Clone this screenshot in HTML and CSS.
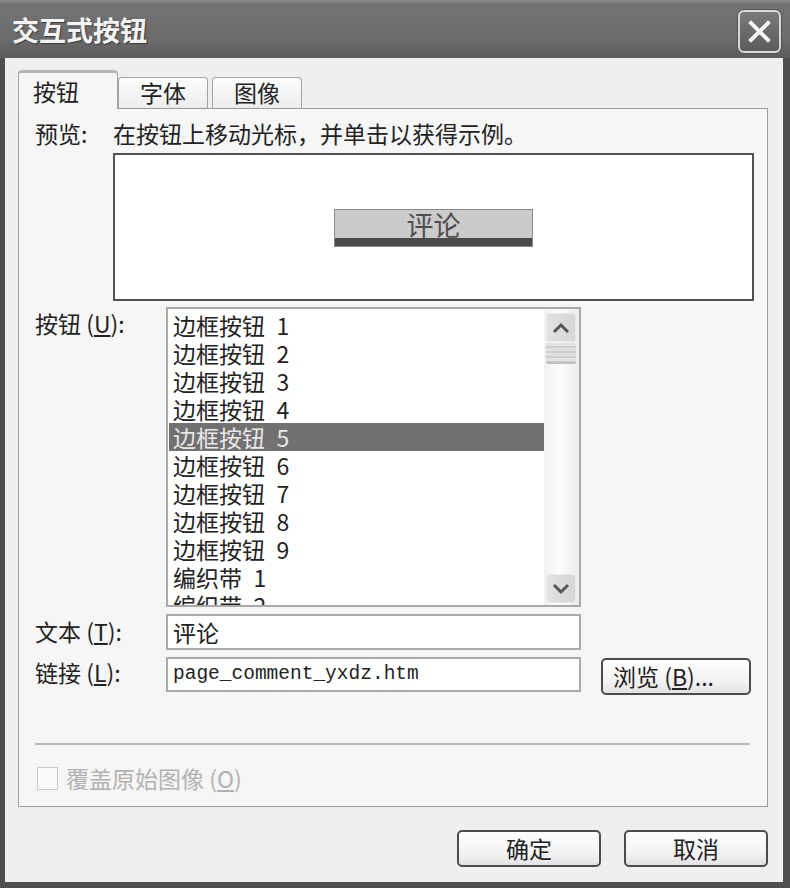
FILE: index.html
```html
<!DOCTYPE html>
<html>
<head>
<meta charset="utf-8">
<link rel="stylesheet" href="styles.css">
</head>
<body>
<div class="window">
  <div class="titlebar">
    <span class="title">交互式按钮</span>
    <div class="close">
      <svg width="39" height="39" viewBox="0 0 39 39"><path d="M11 11 L28 28 M28 11 L11 28" stroke="#f4f4f4" stroke-width="4" stroke-linecap="square" fill="none"/></svg>
    </div>
  </div>

  <div class="frame">
    <div class="tabs">
      <div class="tab active">按钮</div>
      <div class="tab">字体</div>
      <div class="tab">图像</div>
    </div>

    <div class="panel">
      <div class="preview-row">
        <span class="preview-label">预览:</span>
        <span>在按钮上移动光标，并单击以获得示例。</span>
      </div>
      <div class="preview-box">
        <div class="sample">评论</div>
      </div>

      <div class="field list-field">
        <label class="label">按钮 (<u>U</u>):</label>
        <div class="listbox">
          <div class="items">
            <div class="item">边框按钮&ensp;1</div>
            <div class="item">边框按钮&ensp;2</div>
            <div class="item">边框按钮&ensp;3</div>
            <div class="item">边框按钮&ensp;4</div>
            <div class="item selected">边框按钮&ensp;5</div>
            <div class="item">边框按钮&ensp;6</div>
            <div class="item">边框按钮&ensp;7</div>
            <div class="item">边框按钮&ensp;8</div>
            <div class="item">边框按钮&ensp;9</div>
            <div class="item">编织带&ensp;1</div>
            <div class="item">编织带&ensp;2</div>
          </div>
          <div class="scrollbar">
            <div class="sb-btn">
              <svg width="20" height="14" viewBox="0 0 20 14"><path d="M3 11 L10 4 L17 11" stroke="#575757" stroke-width="3" fill="none"/></svg>
            </div>
            <div class="sb-thumb"></div>
            <div class="sb-btn sb-down">
              <svg width="20" height="14" viewBox="0 0 20 14"><path d="M3 3 L10 10 L17 3" stroke="#575757" stroke-width="3" fill="none"/></svg>
            </div>
          </div>
        </div>
      </div>

      <div class="field text-field">
        <label class="label">文本 (<u>T</u>):</label>
        <div class="input">评论</div>
      </div>

      <div class="field link-field">
        <label class="label">链接 (<u>L</u>):</label>
        <div class="input mono">page_comment_yxdz.htm</div>
        <div class="btn browse">浏览 (<u>B</u>)...</div>
      </div>

      <div class="separator"></div>

      <div class="check-row">
        <span class="checkbox"></span>
        <span class="check-label">覆盖原始图像 (<u>O</u>)</span>
      </div>
    </div>

    <div class="actions">
      <div class="btn">确定</div>
      <div class="btn">取消</div>
    </div>
  </div>
</div>
</body>
</html>
```

FILE: styles.css
```css
body {
  margin: 0;
  background: #4f4f4f;
  font-family: "Noto Sans CJK SC", "Noto Sans", sans-serif;
  color: #222;
}

.window {
  width: 790px;
  height: 888px;
  display: flex;
  flex-direction: column;
  background: #4f4f4f;
}

/* title bar */
.titlebar {
  height: 58px;
  flex: none;
  display: flex;
  justify-content: space-between;
  padding: 0 9px 0 12px;
  box-sizing: border-box;
  background: linear-gradient(#8e8e8e 0, #747474 4px, #6a6a6a 40px, #5c5c5c 58px);
}

.title {
  font-size: 27px;
  font-weight: bold;
  line-height: 60px;
  color: #f4f4f4;
  text-shadow: 1px 1px 1px #3a3a3a;
}

.close {
  width: 43px;
  height: 43px;
  margin-top: 10px;
  box-sizing: border-box;
  border: 2px solid #d8d8d8;
  border-radius: 6px;
  background: linear-gradient(#7a7a7a, #5c5c5c);
  box-shadow: 0 0 0 1px #555;
}

.close svg {
  display: block;
}

/* dialog body */
.frame {
  flex: 1;
  margin: 0 7px 6px 5px;
  padding: 12px 15px 0 13px;
  background: #efefef;
  display: flex;
  flex-direction: column;
}

.tabs {
  height: 38px;
  display: flex;
  align-items: flex-end;
  font-size: 23px;
}

.tab {
  width: 90px;
  height: 31px;
  box-sizing: border-box;
  border: 1px solid #a2a2a2;
  border-bottom: none;
  border-radius: 4px 4px 0 0;
  background: linear-gradient(#fdfdfd, #ececec);
  text-align: center;
  line-height: 28px;
  margin-right: 4px;
}

.tab.active {
  width: 100px;
  height: 39px;
  margin-bottom: -1px;
  margin-right: 0;
  position: relative;
  z-index: 1;
  background: #f6f6f6;
  border-top: 3px solid #b4b4b4;
  line-height: 36px;
  text-align: left;
  padding-left: 14px;
}

.panel {
  height: 699px;
  box-sizing: border-box;
  border: 1px solid #9c9c9c;
  background: #f6f6f6;
  padding: 10px 13px 0 16px;
  font-size: 23px;
}

.preview-row {
  display: flex;
  height: 28px;
  line-height: 28px;
}

.preview-label {
  width: 78px;
}

.preview-box {
  margin: 6px 0 0 78px;
  height: 148px;
  box-sizing: border-box;
  border: 2px solid #525252;
  background: #fff;
  display: flex;
  align-items: center;
  justify-content: center;
}

.sample {
  width: 199px;
  height: 38px;
  box-sizing: border-box;
  border: 1px solid #8a8a8a;
  background: #cbcbcb;
  box-shadow: inset 0 -8px 0 #4a4a4a;
  padding-bottom: 8px;
  color: #4e4e4e;
  font-size: 27px;
  line-height: 29px;
  text-align: center;
  margin-top: 2px;
}

.field {
  display: flex;
  align-items: flex-start;
}

.label {
  width: 131px;
  flex: none;
  line-height: 28px;
}

.list-field {
  margin-top: 6px;
}

.list-field .label {
  padding-top: 2px;
}

.listbox {
  width: 415px;
  height: 300px;
  box-sizing: border-box;
  border: 2px solid #a9a9a9;
  background: #fff;
  display: flex;
}

.items {
  flex: 1;
  overflow: hidden;
  padding-top: 2px;
}

.item {
  height: 28px;
  line-height: 28px;
  padding-left: 5px;
  white-space: nowrap;
}

.item.selected {
  background: #717171;
  color: #e8e8e8;
  margin-left: 1px;
  padding-left: 4px;
}

.scrollbar {
  width: 35px;
  box-sizing: border-box;
  padding: 4px 3px 2px 2px;
  display: flex;
  flex-direction: column;
  background: linear-gradient(90deg, #f2f2f2, #fcfcfc 45%, #ececec);
}

.sb-btn {
  height: 29px;
  border-radius: 3px;
  background: linear-gradient(90deg, #e2e2e2, #d6d6d6);
  border: 1px solid #e9e9e9;
  box-sizing: border-box;
  display: flex;
  align-items: center;
  justify-content: center;
}

.sb-thumb {
  height: 19px;
  margin-top: 1px;
  border-radius: 2px;
  background: repeating-linear-gradient(#e2e2e2 0, #e2e2e2 3px, #cdcdcd 3px, #cdcdcd 5px);
  border-bottom: 2px solid #c0c0c0;
}

.sb-down {
  margin-top: auto;
}

.text-field {
  margin-top: 7px;
}

.text-field .label {
  line-height: 34px;
}

.input {
  width: 415px;
  height: 36px;
  box-sizing: border-box;
  border: 2px solid #a9a9a9;
  background: #fff;
  padding-left: 5px;
  line-height: 32px;
  white-space: nowrap;
}

.link-field {
  margin-top: 7px;
}

.link-field .label {
  line-height: 30px;
}

.link-field .input {
  height: 35px;
}

.mono {
  font-family: "Liberation Mono", monospace;
  font-size: 19.5px;
  line-height: 31px;
}

.btn {
  width: 144px;
  height: 37px;
  box-sizing: border-box;
  border: 2px solid #4c4c4c;
  border-radius: 5px;
  background: linear-gradient(#ffffff, #f1f1f1 70%, #e2e2e2);
  text-align: center;
  line-height: 33px;
  font-size: 23px;
}

.browse {
  width: 150px;
  margin: 1px 0 0 20px;
  text-align: left;
  padding-left: 10px;
}

.separator {
  height: 2px;
  margin: 48px 4px 0 0;
  background: #b9b9b9;
}

.check-row {
  margin-top: 22px;
  display: flex;
  align-items: center;
  height: 23px;
  color: #b2b2b2;
}

.checkbox {
  width: 21px;
  height: 23px;
  box-sizing: border-box;
  border: 1px solid #cacaca;
  background: #fafafa;
  margin: 0 8px 0 2px;
}

.check-label {
  line-height: 23px;
}

.actions {
  margin-top: 23px;
  display: flex;
  justify-content: flex-end;
  gap: 23px;
  font-size: 23px;
}
```
